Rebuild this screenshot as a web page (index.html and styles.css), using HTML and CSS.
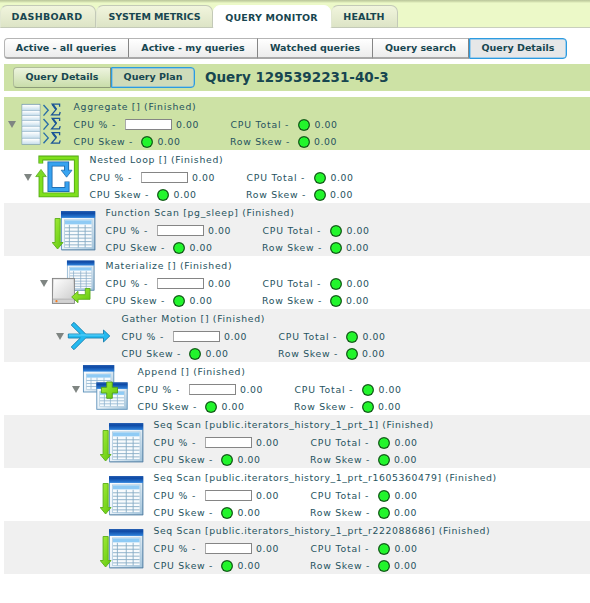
FILE: index.html
```html
<!DOCTYPE html>
<html lang="en">
<head>
<meta charset="utf-8">
<title>Query Monitor</title>
<link rel="stylesheet" href="styles.css">
</head>
<body>
<svg class="defs" width="0" height="0" aria-hidden="true">
  <defs>
    <linearGradient id="blueHead" x1="0" y1="0" x2="0" y2="1"><stop offset="0" stop-color="#2a62b4"/><stop offset=".3" stop-color="#0d48a4"/><stop offset="1" stop-color="#2f83dc"/></linearGradient>
    <linearGradient id="sheet" x1="0" y1="0" x2="1" y2="1"><stop offset="0" stop-color="#fff"/><stop offset=".5" stop-color="#e8f1f8"/><stop offset="1" stop-color="#9fc2da"/></linearGradient>
    <linearGradient id="green" x1="0" y1="0" x2="1" y2="1"><stop offset="0" stop-color="#a8ee3c"/><stop offset="1" stop-color="#5fc80c"/></linearGradient>
    <linearGradient id="cell" x1="0" y1="0" x2="0" y2="1"><stop offset="0" stop-color="#fff"/><stop offset="1" stop-color="#c8dfed"/></linearGradient>
    <linearGradient id="disk" x1="0" y1="0" x2="1" y2="1"><stop offset="0" stop-color="#fff"/><stop offset="1" stop-color="#cfcfcf"/></linearGradient>
    <symbol id="table" viewBox="0 0 35 40" preserveAspectRatio="none">
      <rect x=".5" y="1" width="34" height="38.5" fill="url(#sheet)" stroke="#6f9fc4"/>
      <path d="M34.5 7V39.5H1" fill="none" stroke="#587f9e"/>
      <rect x="0" y="0" width="35" height="7" fill="url(#blueHead)"/>
      <rect x="3.5" y="9" width="28" height="28" fill="#f8fbfd" stroke="#a3c3da" stroke-width=".7"/>
      <rect x="4" y="9.5" width="27" height="4" fill="#8fcbf5"/>
      <path d="M4 17H31M4 20.5H31M4 24H31M4 27.5H31M4 31H31M4 34.3H31M8.5 14V37M17.5 14V37M24.5 14V37" stroke="#86abc6" stroke-width=".9"/>
    </symbol>
    <symbol id="scan" viewBox="0 0 46 46">
      <use href="#table" x="9" y="5" width="34.5" height="39.5"/>
      <path d="M3.1 12.5H8.2V36.5H11L5.6 43L.2 36.5H3.1Z" fill="url(#green)" stroke="#5aae18" stroke-width=".9"/>
    </symbol>
  </defs>
</svg>

<nav class="tabs">
  <a class="tab tab-dash">DASHBOARD</a>
  <a class="tab tab-metrics">SYSTEM METRICS</a>
  <a class="tab tab-monitor active">QUERY MONITOR</a>
  <a class="tab tab-health">HEALTH</a>
</nav>

<div class="buttons main-buttons">
  <button class="b-all">Active - all queries</button>
  <button class="b-my">Active - my queries</button>
  <button class="b-watched">Watched queries</button>
  <button class="b-search">Query search</button>
  <button class="b-details selected">Query Details</button>
</div>

<header class="query-bar">
  <div class="buttons sub-buttons">
    <button class="b-sub-details">Query Details</button>
    <button class="b-plan selected">Query Plan</button>
  </div>
  <h1>Query 1295392231-40-3</h1>
</header>

<main class="plan">
  <section class="node d0 current">
    <i class="toggle open"></i>
    <svg class="icon" viewBox="0 0 46 46">
      <rect x="2" y="4.3" width="18" height="40" fill="#e5f1f8" stroke="#7b9db2" stroke-width=".8"/>
      <g fill="url(#cell)"><rect x="2.5" y="5" width="17" height="5"/><rect x="2.5" y="11" width="17" height="4"/><rect x="2.5" y="16" width="17" height="4"/><rect x="2.5" y="21" width="17" height="5"/><rect x="2.5" y="27" width="17" height="4"/><rect x="2.5" y="32" width="17" height="6"/><rect x="2.5" y="39" width="17" height="5"/></g>
      <path d="M2 10.5H20M2 15.5H20M2 20.5H20M2 26.3H20M2 31.5H20M2 38.3H20" stroke="#9fbdce" stroke-width=".8"/>
      <path d="M23.5 5L28.2 10.3L23.5 15.6M23.5 19L28.2 24.3L23.5 29.6M23.5 32.6L28.2 37.9L23.5 43.2" fill="none" stroke="#2b6fa6" stroke-width="1.4"/>
      <g fill="none" stroke="#1b5596" stroke-width="1.3"><path id="sig" d="M39.6 6.8V4.2H32.2L36.2 9.3L31.6 14.8H39.4L40.2 12"/><use href="#sig" y="14.1"/><use href="#sig" y="28.4"/></g>
      <path d="M32.6 4.4L36.2 9.3M32.6 18.5L36.2 23.4M32.6 32.8L36.2 37.7" stroke="#1b5596" stroke-width="2"/>
    </svg>
    <div class="info"><h2>Aggregate [] (Finished)</h2>
      <div class="stat"><span class="label">CPU % -</span><i class="bar"></i><b>0.00</b><span class="label right">CPU Total -</span><i class="dot"></i><b>0.00</b></div>
      <div class="stat skew"><span class="label">CPU Skew -</span><i class="dot"></i><b>0.00</b><span class="label right">Row Skew -</span><i class="dot"></i><b>0.00</b></div>
    </div>
  </section>

  <section class="node d1">
    <i class="toggle open"></i>
    <svg class="icon" viewBox="0 0 46 46">
      <path d="M4.8 10.5V5H40.3V41.8H5V23" fill="none" stroke="#4fa413" stroke-width="4.8"/>
      <path d="M5 16.4L10.3 23.6H-.3Z" fill="#7bd928" stroke="#4fa413" stroke-width=".7"/>
      <path d="M4.8 10V5H40.3V41.8H5V22" fill="none" stroke="#7fe01d" stroke-width="3.2"/>
      <path d="M31 28.5V36.5H14V11H30.6V18" fill="none" stroke="#1761a5" stroke-width="5"/>
      <path d="M25.2 17.2H36L30.6 24.2Z" fill="#3aa6f2" stroke="#1761a5" stroke-width=".7"/>
      <path d="M31 29V36.5H14V11H30.6V19" fill="none" stroke="#37a2f0" stroke-width="3.4"/>
    </svg>
    <div class="info"><h2>Nested Loop [] (Finished)</h2>
      <div class="stat"><span class="label">CPU % -</span><i class="bar"></i><b>0.00</b><span class="label right">CPU Total -</span><i class="dot"></i><b>0.00</b></div>
      <div class="stat skew"><span class="label">CPU Skew -</span><i class="dot"></i><b>0.00</b><span class="label right">Row Skew -</span><i class="dot"></i><b>0.00</b></div>
    </div>
  </section>

  <section class="node d2">
    <i class="toggle"></i>
    <svg class="icon" viewBox="0 0 46 46"><use href="#scan" width="46" height="46"/></svg>
    <div class="info"><h2>Function Scan [pg_sleep] (Finished)</h2>
      <div class="stat"><span class="label">CPU % -</span><i class="bar"></i><b>0.00</b><span class="label right">CPU Total -</span><i class="dot"></i><b>0.00</b></div>
      <div class="stat skew"><span class="label">CPU Skew -</span><i class="dot"></i><b>0.00</b><span class="label right">Row Skew -</span><i class="dot"></i><b>0.00</b></div>
    </div>
  </section>

  <section class="node d2">
    <i class="toggle open"></i>
    <svg class="icon" viewBox="0 0 46 46">
      <use href="#table" x="14.8" y="1.2" width="27.8" height="30.5"/>
      <rect x=".4" y="19.4" width="22" height="25" fill="#d2d2d2" stroke="#808080" stroke-width=".9"/>
      <path d="M1.8 20.4H21L22 39.6H.9Z" fill="url(#disk)"/>
      <path d="M.8 40.2H22" stroke="#aaa" stroke-width=".7"/>
      <circle cx="4.5" cy="42.2" r="1.1" fill="#f47c20"/>
      <path d="M33.3 29.5H38V40.3H26V43.7L19.7 38L26 32.3V35.7H33.3Z" fill="url(#green)" stroke="#5aae18" stroke-width=".9"/>
    </svg>
    <div class="info"><h2>Materialize [] (Finished)</h2>
      <div class="stat"><span class="label">CPU % -</span><i class="bar"></i><b>0.00</b><span class="label right">CPU Total -</span><i class="dot"></i><b>0.00</b></div>
      <div class="stat skew"><span class="label">CPU Skew -</span><i class="dot"></i><b>0.00</b><span class="label right">Row Skew -</span><i class="dot"></i><b>0.00</b></div>
    </div>
  </section>

  <section class="node d3">
    <i class="toggle open"></i>
    <svg class="icon" viewBox="0 0 46 46">
      <path d="M.3 22H12.3L3.2 13L6 10.3L17.7 22H35.5V18L41.8 24L35.5 30V26H17.7L6 37.7L3.2 35L12.3 26H.3Z" fill="#25baf0" stroke="#167fae" stroke-width=".9"/>
      <path d="M1 23H36" stroke="#74dcff" stroke-width=".8"/>
    </svg>
    <div class="info"><h2>Gather Motion [] (Finished)</h2>
      <div class="stat"><span class="label">CPU % -</span><i class="bar"></i><b>0.00</b><span class="label right">CPU Total -</span><i class="dot"></i><b>0.00</b></div>
      <div class="stat skew"><span class="label">CPU Skew -</span><i class="dot"></i><b>0.00</b><span class="label right">Row Skew -</span><i class="dot"></i><b>0.00</b></div>
    </div>
  </section>

  <section class="node d4">
    <i class="toggle open"></i>
    <svg class="icon" viewBox="0 0 46 46">
      <g id="mini">
        <rect x="-.6" y=".6" width="30.4" height="26.4" fill="url(#sheet)" stroke="#5e92ba" stroke-width=".9"/>
        <rect x="-1" y="0" width="31.2" height="6.6" fill="url(#blueHead)"/>
        <rect x="2.3" y="9" width="24.6" height="15.3" fill="#f5fafd" stroke="#a8c5d9" stroke-width=".6"/>
        <rect x="2.5" y="9.2" width="24.2" height="3.4" fill="#8fcbf5"/>
        <path d="M2.5 15.5H26.7M2.5 18.5H26.7M2.5 21.5H26.7M7 12.6V24M13 12.6V24M20 12.6V24" stroke="#8fb4cf" stroke-width=".8"/>
      </g>
      <use href="#mini" x="13.4" y="17.3"/>
      <path d="M22.7 17H28.3V22.3H33.5V28H28.3V33.3H22.7V28H17.4V22.3H22.7Z" fill="url(#green)" stroke="#4f9e18" stroke-width=".9"/>
    </svg>
    <div class="info"><h2>Append [] (Finished)</h2>
      <div class="stat"><span class="label">CPU % -</span><i class="bar"></i><b>0.00</b><span class="label right">CPU Total -</span><i class="dot"></i><b>0.00</b></div>
      <div class="stat skew"><span class="label">CPU Skew -</span><i class="dot"></i><b>0.00</b><span class="label right">Row Skew -</span><i class="dot"></i><b>0.00</b></div>
    </div>
  </section>

  <section class="node d5">
    <i class="toggle"></i>
    <svg class="icon" viewBox="0 0 46 46"><use href="#scan" width="46" height="46"/></svg>
    <div class="info"><h2>Seq Scan [public.iterators_history_1_prt_1] (Finished)</h2>
      <div class="stat"><span class="label">CPU % -</span><i class="bar"></i><b>0.00</b><span class="label right">CPU Total -</span><i class="dot"></i><b>0.00</b></div>
      <div class="stat skew"><span class="label">CPU Skew -</span><i class="dot"></i><b>0.00</b><span class="label right">Row Skew -</span><i class="dot"></i><b>0.00</b></div>
    </div>
  </section>

  <section class="node d5">
    <i class="toggle"></i>
    <svg class="icon" viewBox="0 0 46 46"><use href="#scan" width="46" height="46"/></svg>
    <div class="info"><h2>Seq Scan [public.iterators_history_1_prt_r1605360479] (Finished)</h2>
      <div class="stat"><span class="label">CPU % -</span><i class="bar"></i><b>0.00</b><span class="label right">CPU Total -</span><i class="dot"></i><b>0.00</b></div>
      <div class="stat skew"><span class="label">CPU Skew -</span><i class="dot"></i><b>0.00</b><span class="label right">Row Skew -</span><i class="dot"></i><b>0.00</b></div>
    </div>
  </section>

  <section class="node d5">
    <i class="toggle"></i>
    <svg class="icon" viewBox="0 0 46 46"><use href="#scan" width="46" height="46"/></svg>
    <div class="info"><h2>Seq Scan [public.iterators_history_1_prt_r222088686] (Finished)</h2>
      <div class="stat"><span class="label">CPU % -</span><i class="bar"></i><b>0.00</b><span class="label right">CPU Total -</span><i class="dot"></i><b>0.00</b></div>
      <div class="stat skew"><span class="label">CPU Skew -</span><i class="dot"></i><b>0.00</b><span class="label right">Row Skew -</span><i class="dot"></i><b>0.00</b></div>
    </div>
  </section>
</main>
</body>
</html>
```
FILE: styles.css
```css
* { box-sizing: border-box; }
body {
  margin: 0;
  height: 603px;
  overflow: hidden;
  background: #fff;
  color: #174650;
  font-family: "DejaVu Sans", sans-serif;
}
.defs { display: block; }

.tabs {
  display: flex;
  height: 28px;
  padding-top: 5px;
  background: linear-gradient(#b9c59b 0, #d6e3b2 2px, #ecf9c8 3px);
  box-shadow: inset 0 -1px #c9cfbd;
}
.tab {
  height: 23px;
  border: 1px solid #c3c9b8;
  border-left-color: #e2e8d2;
  border-radius: 7px 7px 0 0;
  background: linear-gradient(#f1f5dd, #dde4c6);
  font-size: 9.5px;
  font-weight: bold;
  letter-spacing: .2px;
  line-height: 21px;
  text-align: center;
  white-space: nowrap;
}
.tab.active { background: #fff; border-color: #fff; line-height: 23px; }
.tab-dash { width: 96px; padding-right: 2px; letter-spacing: .35px; }
.tab-metrics { width: 117px; letter-spacing: -.1px; }
.tab-monitor { width: 118px; padding-right: 1px; }
.tab-health { width: 67px; letter-spacing: .1px; padding-right: 1px; }

.buttons { display: flex; }
button {
  height: 21px;
  margin: 0;
  padding: 0;
  border: 1px solid #b5b5b5;
  border-right-color: #858585;
  border-bottom: 2px solid #a9a9a9;
  border-left-width: 0;
  background: linear-gradient(#fff, #ececec);
  color: #174650;
  font: bold 9.5px/17px "DejaVu Sans", sans-serif;
  white-space: nowrap;
}
button:first-child { border-left-width: 1px; border-radius: 4px 0 0 4px; }
button:last-child { border-radius: 0 4px 4px 0; }
button.selected { border: 1.5px solid #2c9be0; background: #e6e7e8; box-shadow: inset 0 0 0 .5px #5cb2ea; }
.main-buttons { margin: 10px 0 0 4px; }
.main-buttons button { padding-bottom: 2px; }
.b-all { width: 125px; padding-right: 1px; }
.b-my { width: 129px; }
.b-watched { width: 115px; }
.b-search { width: 96px; }
.b-details { width: 98px; }

.query-bar {
  display: flex;
  align-items: center;
  height: 27px;
  margin: 5px 0 0 4px;
  padding-left: 9px;
  background: #cde2a5;
}
.sub-buttons button { padding-bottom: 2px; border-color: #b0bd9b #849270 #8c9b78 #b0bd9b; border-bottom-width: 1px; background: linear-gradient(#edf4df, #c9ddaa); }
.sub-buttons button.selected { border-color: #2c9be0; background: #cfdbba; }
.b-sub-details { width: 98px; }
.b-plan { width: 84px; }
.query-bar h1 { margin: 0 0 0 10px; font-size: 13.5px; line-height: 27px; }

.plan { margin: 6px 0 0 4px; }
.node { display: flex; height: 53px; background: #fff; }
.node:nth-child(odd) { background: #f0f0f0; }
.node.current { background: #cde2a5; }
.d0 { padding-left: 4px; }
.d1 { padding-left: 20px; }
.d2 { padding-left: 36px; }
.d3 { padding-left: 52px; }
.d4 { padding-left: 68px; }
.d5 { padding-left: 84px; }
.toggle { width: 9px; }
.toggle.open::before {
  content: "";
  display: block;
  width: 8px;
  height: 7px;
  margin-top: 24px;
  background: #7f8582;
  clip-path: polygon(0 0, 100% 0, 50% 100%);
}
.icon { width: 46px; height: 46px; margin: 3px 0 0 3px; overflow: visible; }
.info { margin-left: 7.5px; padding-top: 1px; color: #26535e; font-size: 9.3px; letter-spacing: .8px; white-space: nowrap; }
.info h2 { margin: 0 0 1px; font-size: 9.3px; font-weight: normal; letter-spacing: .69px; line-height: 17px; }
.d5 .info h2 { letter-spacing: .6px; }
.stat { display: flex; align-items: center; height: 17px; }
.label { width: 51px; }
.skew .label { width: 67.5px; letter-spacing: .72px; }
.label.right, .skew .label.right { width: 67.5px; }
.bar {
  width: 47px;
  height: 11px;
  border: 1px solid #858585;
  border-left-color: #aaa;
  background: #fff;
}
.dot {
  width: 12px;
  height: 12px;
  border-radius: 50%;
  background: radial-gradient(circle, #22f52c 4.3px, #14621a 4.9px);
}
.stat b { width: 54.5px; margin-left: 4.5px; padding-top: 1px; font-weight: normal; letter-spacing: .55px; line-height: 18px; }
.skew b { width: 72.5px; }
```
